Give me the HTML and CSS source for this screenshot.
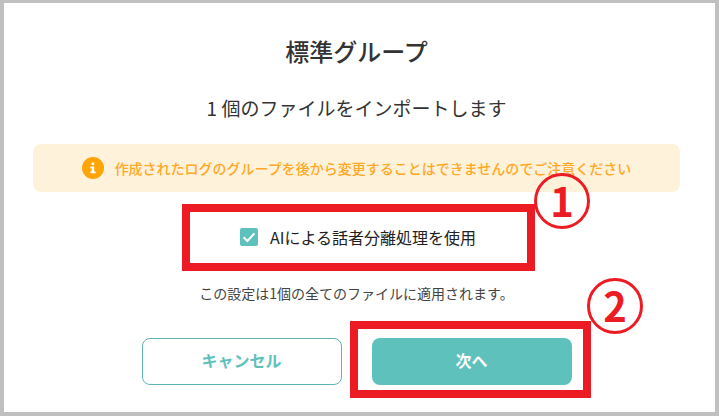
FILE: index.html
```html
<!DOCTYPE html>
<html lang="ja">
<head>
    <meta charset="UTF-8">
    <title>標準グループ</title>
    <link rel="stylesheet" href="styles.css">
</head>
<body>
    <div class="dialog">
        <h2 class="dialog-title">標準グループ</h2>
        <p class="dialog-subtitle">1 個のファイルをインポートします</p>

        <div class="notice">
            <svg class="notice-icon" width="22" height="22" viewBox="0 0 22 22">
                <circle cx="11" cy="11" r="11" fill="#ffa50a"/>
                <rect x="9.6" y="5.6" width="2.6" height="2.4" fill="#fff"/>
                <path d="M8.4 9.6h3.8v5h1.4v1.7H8.4v-1.7h1.3v-3.3H8.4z" fill="#fff"/>
            </svg>
            <span class="notice-text">作成されたログのグループを後から変更することはできませんのでご注意ください</span>
        </div>

        <label class="check-row">
            <span class="check-box">
                <svg width="18" height="18" viewBox="0 0 18 18">
                    <path d="M3.6 9.2l3.8 3.8 7-7.6" fill="none" stroke="#fff" stroke-width="2"/>
                </svg>
            </span>
            <span class="check-label">AIによる話者分離処理を使用</span>
        </label>

        <p class="check-note">この設定は1個の全てのファイルに適用されます。</p>

        <div class="actions">
            <button class="btn btn-cancel">キャンセル</button>
            <button class="btn btn-next">次へ</button>
        </div>

        <!-- 注釈 -->
        <div class="mark mark-check"></div>
        <div class="mark mark-next"></div>
        <div class="mark-num mark-num-1">1</div>
        <div class="mark-num mark-num-2">2</div>
    </div>
</body>
</html>
```

FILE: styles.css
```css
html, body {
    margin: 0;
    padding: 0;
    width: 719px;
    height: 416px;
    overflow: hidden;
    background: #fff;
    font-family: "Noto Sans CJK JP", "Noto Sans", sans-serif;
}

.dialog {
    position: relative;
    box-sizing: border-box;
    width: 719px;
    height: 416px;
    border: solid #c0c0c0;
    border-width: 3px 4px 4px 4px;
    background: #fff;
    padding: 32px 35px 0 29px;
    display: flex;
    flex-direction: column;
    align-items: stretch;
    color: #333;
}

.dialog-title {
    margin: 0;
    font-size: 24px;
    line-height: 32px;
    font-weight: 500;
    text-align: center;
}

.dialog-subtitle {
    margin: 28px 0 0;
    font-size: 19px;
    line-height: 26px;
    text-align: center;
}

.notice {
    margin-top: 23px;
    height: 48px;
    border-radius: 8px;
    background: #fff2da;
    display: flex;
    justify-content: center;
    align-items: center;
    gap: 11px;
}

.notice-text {
    font-size: 14px;
    font-weight: 500;
    color: #ffa826;
}

.check-row {
    margin-top: 36px;
    padding-left: 3px;
    display: flex;
    justify-content: center;
    align-items: center;
    gap: 12px;
    height: 18px;
}

.check-box {
    width: 18px;
    height: 18px;
    border-radius: 2px;
    background: #5fc1bb;
    display: block;
}

.check-box svg {
    display: block;
}

.check-label {
    font-size: 16px;
    color: #222;
}

.check-note {
    margin: 38px 0 0;
    font-size: 14px;
    line-height: 18px;
    text-align: center;
    color: #444;
}

.actions {
    margin-top: 36px;
    display: flex;
    justify-content: center;
    gap: 30px;
}

.btn {
    width: 200px;
    height: 47px;
    box-sizing: border-box;
    border-radius: 8px;
    font-family: inherit;
    font-size: 16px;
    font-weight: 700;
    padding: 0 0 3px;
}

.btn-cancel {
    background: #fff;
    border: 1px solid #5fb5b1;
    color: #5fc1bb;
}

.btn-next {
    background: #5fc1bb;
    border: none;
    color: #fff;
}

/* 赤い枠と番号 */
.mark {
    position: absolute;
    box-sizing: border-box;
    border: 8px solid #ed1c24;
}

.mark-check {
    left: 178px;
    top: 201px;
    width: 353px;
    height: 67px;
}

.mark-next {
    left: 346px;
    top: 318px;
    width: 241px;
    height: 77px;
}

.mark-num {
    position: absolute;
    box-sizing: border-box;
    width: 56px;
    height: 56px;
    border: 3px solid #ed1c24;
    border-radius: 50%;
    color: #ed1c24;
    font-size: 40px;
    line-height: 48px;
    font-weight: 700;
    text-align: center;
}

.mark-num-1 {
    left: 530px;
    top: 170px;
}

.mark-num-2 {
    left: 583px;
    top: 275px;
}
```
